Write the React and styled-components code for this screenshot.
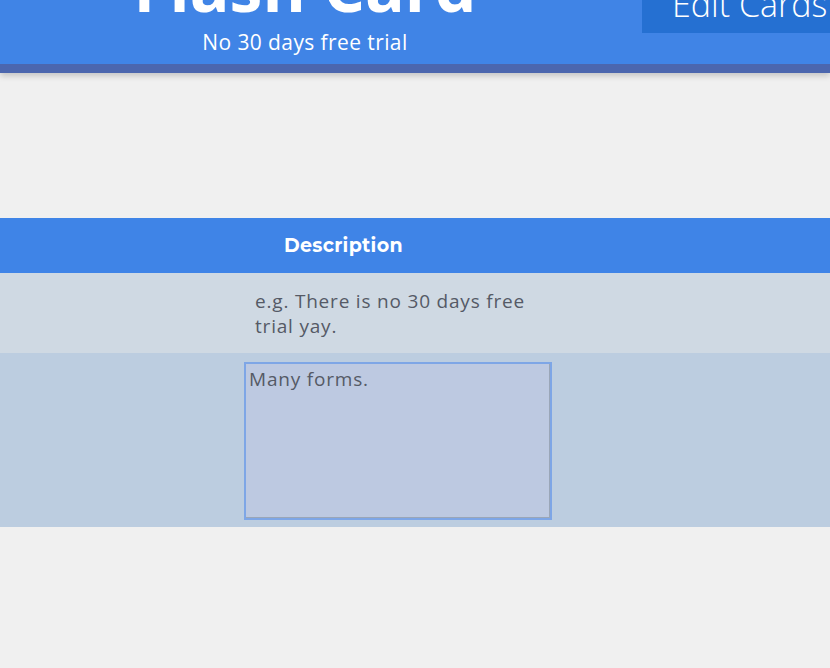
import styled, { createGlobalStyle } from 'styled-components';

const GlobalStyle = createGlobalStyle`
  html, body {
    margin: 0;
    padding: 0;
    background-color: #f0f0f0;
    overflow: hidden;
  }
  body {
    font-family: 'Open Sans', 'Liberation Sans', sans-serif;
  }
`;

const Page = styled.div`
  width: 830px;
  height: 668px;
  overflow: hidden;
`;

const Header = styled.header`
  display: flex;
  align-items: flex-start;
  margin-top: -62px;
  height: 126px;
  background-color: #4084e6;
  border-bottom: 9px solid #4b66ae;
  box-shadow: 0 3px 6px rgba(0, 0, 0, 0.18);
  color: #ffffff;
`;

const TitleBlock = styled.div`
  width: 610px;
  flex-shrink: 0;
  display: flex;
  flex-direction: column;
  align-items: center;
`;

const Title = styled.h1`
  margin: 0;
  padding-top: 3px;
  font-size: 66px;
  font-weight: 700;
  line-height: 90px;
`;

const Subtitle = styled.p`
  margin: 0;
  font-size: 21px;
  font-weight: 400;
  letter-spacing: 0.4px;
  line-height: 22px;
`;

const EditButton = styled.button`
  margin-left: 32px;
  flex-shrink: 0;
  width: 200px;
  height: 95px;
  padding: 37px 0 0 30px;
  text-align: left;
  border: none;
  background-color: #2570d2;
  color: #ffffff;
  font-family: 'Open Sans', 'Liberation Sans', sans-serif;
  font-size: 34px;
  font-weight: 300;
  line-height: 40px;
  white-space: nowrap;
`;

const Table = styled.section`
  margin-top: 145px;
  display: flex;
  flex-direction: column;
`;

const Row = styled.div`
  display: grid;
  grid-template-columns: 244px 308px 1fr;
  background-color: ${(p) => p.$bg};
  height: ${(p) => p.$height}px;
`;

const HeadCell = styled.div`
  grid-column: 2;
  padding-left: 40px;
  display: flex;
  align-items: center;
  color: #ffffff;
  font-family: 'Montserrat', 'Open Sans', 'Liberation Sans', sans-serif;
  font-size: 19px;
  font-weight: 700;
  letter-spacing: 0.3px;
`;

const Cell = styled.div`
  grid-column: 2;
  padding: ${(p) => p.$pad};
  color: #555a66;
  font-size: 19px;
  letter-spacing: 0.8px;
  line-height: 25px;
`;

const TextBox = styled.textarea`
  display: block;
  box-sizing: border-box;
  width: 308px;
  height: 158px;
  margin: 0;
  padding: 3px 3px;
  resize: none;
  border: 2px solid #7ea6e6;
  box-shadow: inset -1px -1px 0 #9aa6b8;
  outline: none;
  background-color: #bdc9e1;
  color: #555a66;
  font-family: 'Open Sans', 'Liberation Sans', sans-serif;
  font-size: 19px;
  letter-spacing: 0.8px;
  line-height: 25px;
`;

export default function App() {
  return (
    <Page>
      <GlobalStyle />
      <Header>
        <TitleBlock>
          <Title>Flash Card</Title>
          <Subtitle>No 30 days free trial</Subtitle>
        </TitleBlock>
        <EditButton>Edit Cards</EditButton>
      </Header>
      <Table>
        <Row $bg="#3f84e7" $height={55}>
          <HeadCell>Description</HeadCell>
        </Row>
        <Row $bg="#cfd9e3" $height={80}>
          <Cell $pad="16px 20px 0 11px">e.g. There is no 30 days free trial yay.</Cell>
        </Row>
        <Row $bg="#bccde0" $height={174}>
          <Cell $pad="9px 0 0 0">
            <TextBox defaultValue="Many forms." />
          </Cell>
        </Row>
      </Table>
    </Page>
  );
}
